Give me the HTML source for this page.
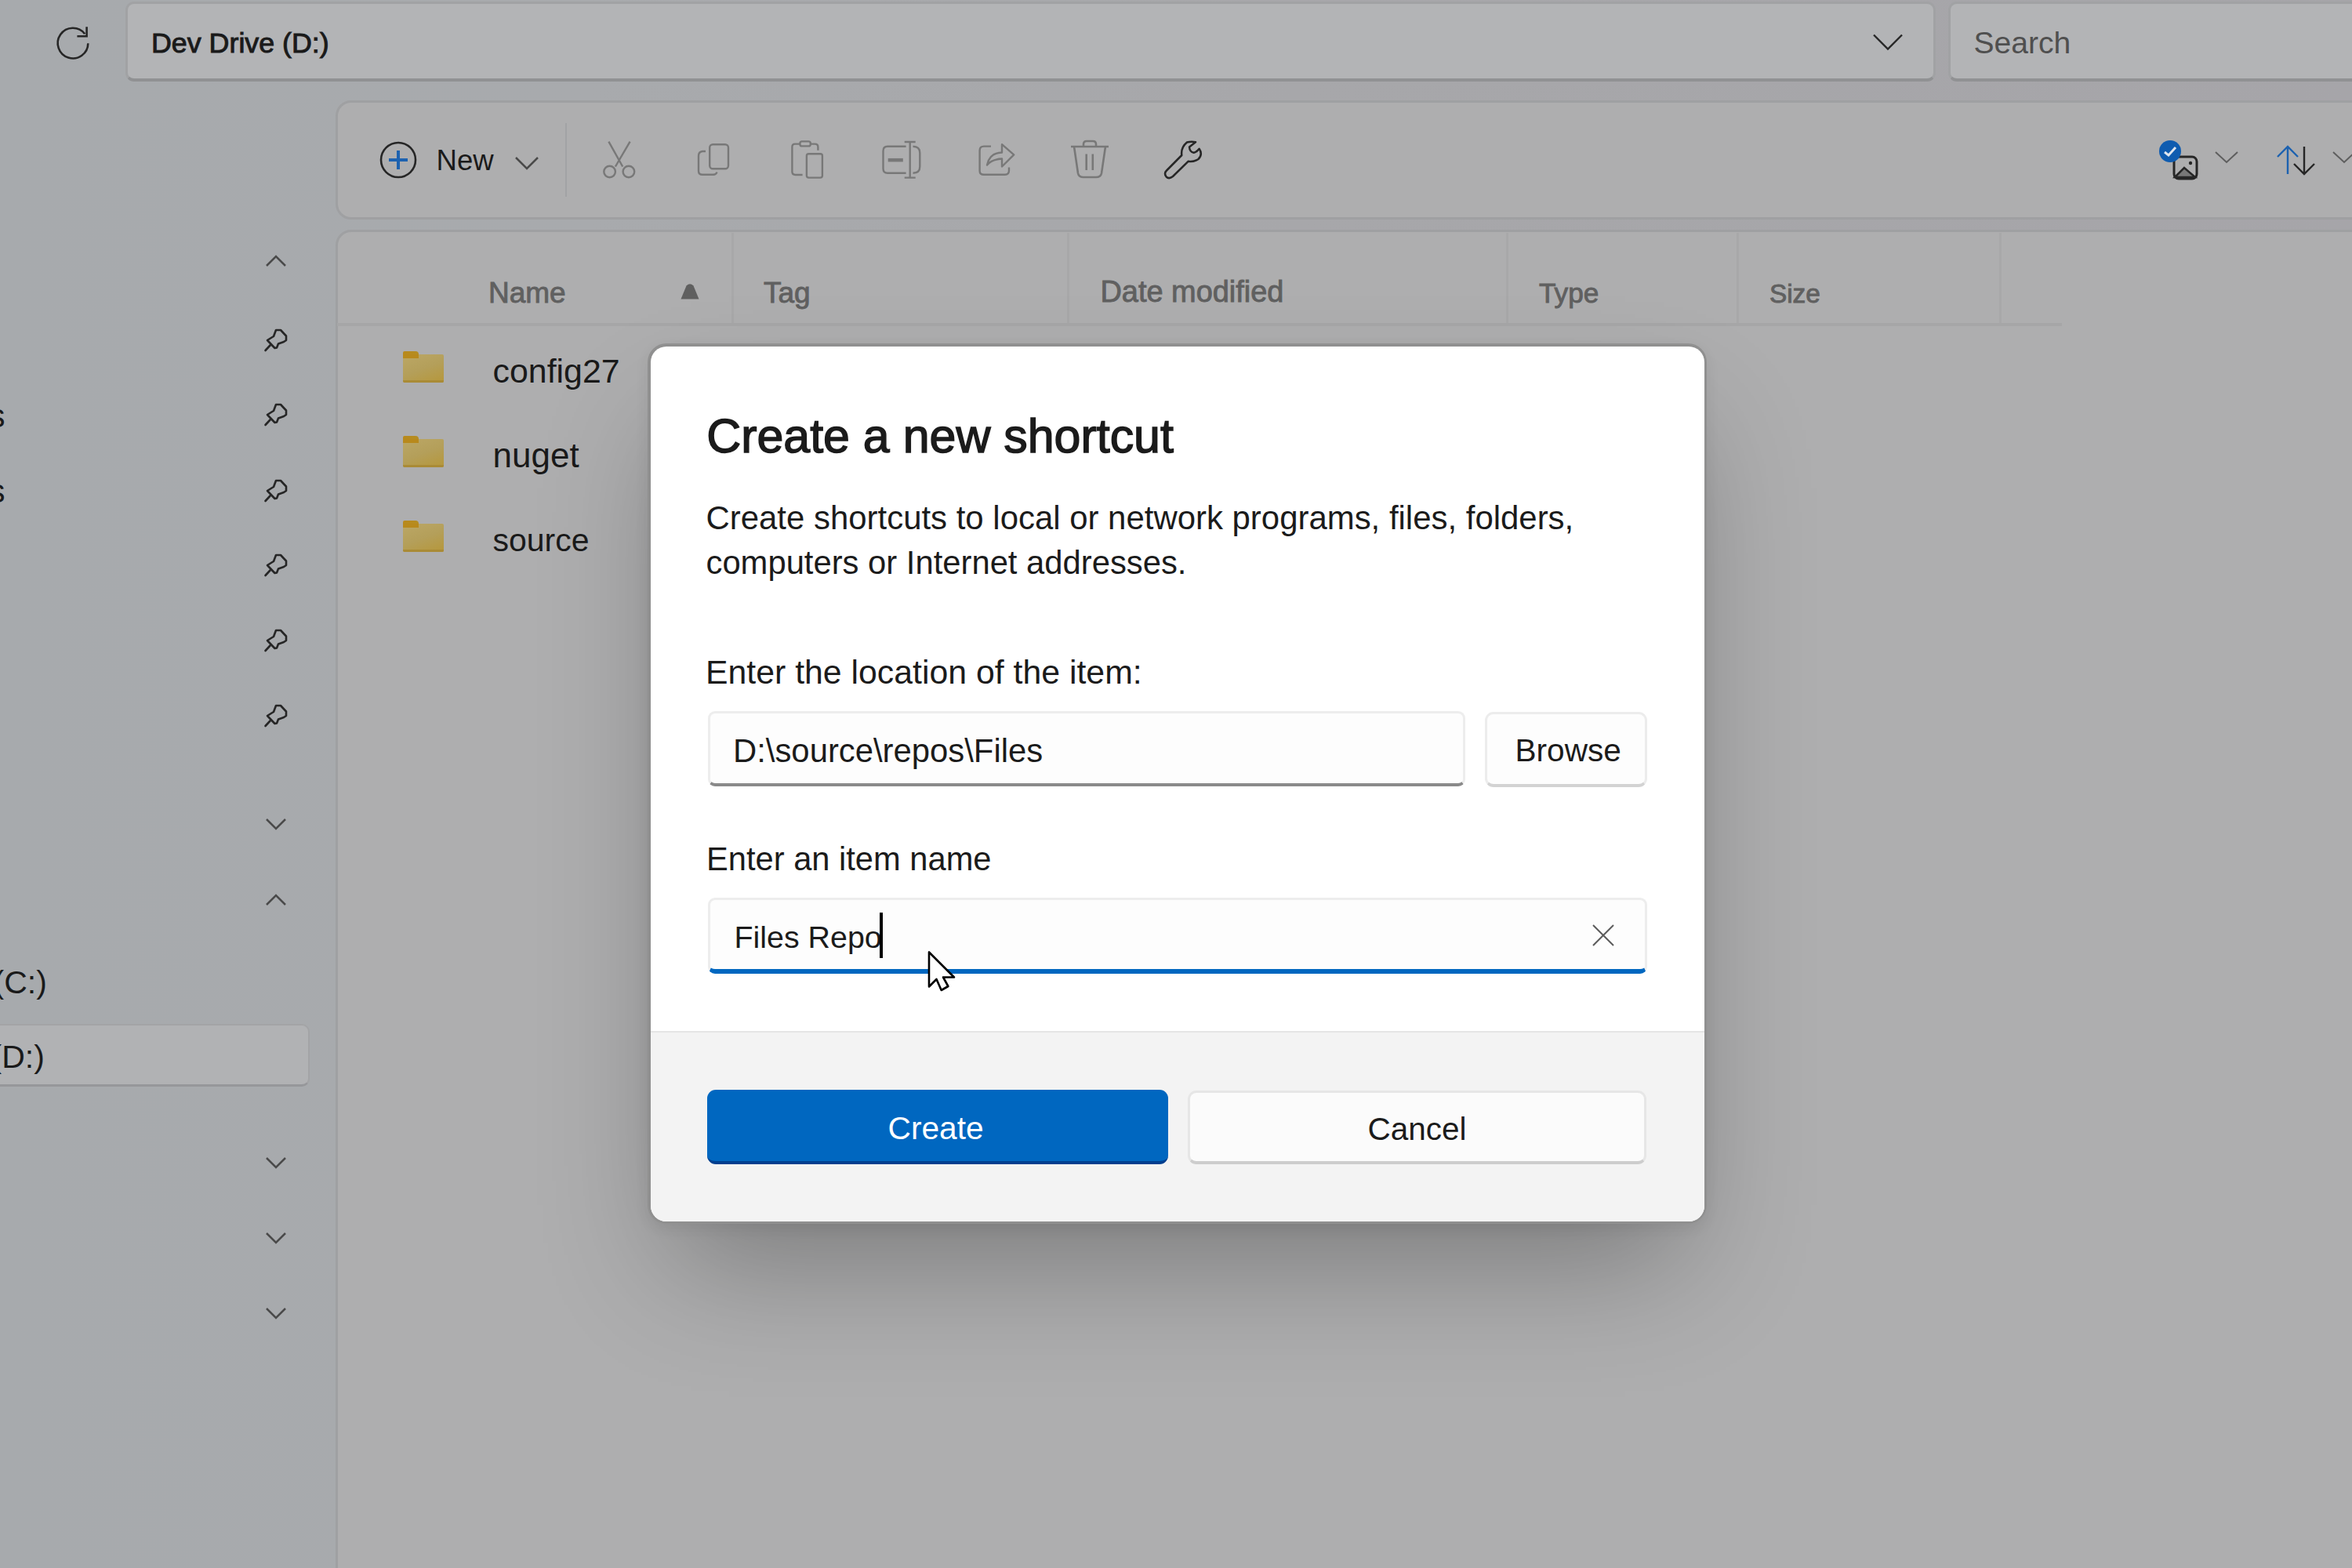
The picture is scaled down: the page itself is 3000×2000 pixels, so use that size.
<!DOCTYPE html><html><head><meta charset="utf-8"><style>
html,body{margin:0;padding:0;}
body{width:3000px;height:2000px;overflow:hidden;position:relative;background:linear-gradient(90deg,#a7aaad 0%,#a8aaad 25%,#a7a7aa 55%,#a6a5a9 100%);font-family:"Liberation Sans",sans-serif;}
.t{position:absolute;white-space:nowrap;}
svg{overflow:visible}
</style></head><body>
<svg style="position:absolute;left:0px;top:0.4px;" width="140" height="100" viewBox="0 0 140 100"><path d="M 110.6 34.3 L 110.6 46.3 L 98.4 46.3" stroke="#262626" stroke-width="2.6" fill="none" stroke-linejoin="miter"/><path d="M 108.2 43.2 A 19.3 19.3 0 1 0 112.3 55.2" stroke="#262626" stroke-width="2.6" fill="none"/></svg>
<div style="position:absolute;left:160px;top:2px;width:2309px;height:102px;box-sizing:border-box;background:#b3b4b6;border:3px solid #a1a2a4;border-bottom:4px solid #909193;border-radius:11px;"></div>
<div class="t" style="left:193.0px;top:37.7px;font-size:35.8px;line-height:35.8px;font-weight:400;color:#1a1a1a;-webkit-text-stroke:1.0px #1a1a1a;">Dev Drive (D:)</div>
<svg style="position:absolute;left:2385px;top:40px;" width="46" height="30" viewBox="0 0 46 30"><path d="M 5 4.5 L 23 22.5 L 41 4.5" stroke="#262626" stroke-width="2.4" fill="none"/></svg>
<div style="position:absolute;left:2485px;top:2px;width:600px;height:102px;box-sizing:border-box;background:#b3b4b6;border:3px solid #a1a2a4;border-bottom:4px solid #909193;border-radius:11px;"></div>
<div class="t" style="left:2517.5px;top:34.9px;font-size:39.1px;line-height:39.1px;font-weight:400;color:#4f4f4f;">Search</div>
<div style="position:absolute;left:428px;top:128px;width:2700px;height:152px;box-sizing:border-box;background:#aeaeaf;border:3px solid #9fa0a2;border-radius:20px;"></div>
<svg style="position:absolute;left:480px;top:176px;" width="60" height="60" viewBox="0 0 60 60"><circle cx="28" cy="28" r="22" stroke="#262626" stroke-width="2.6" fill="none"/><path d="M 16 28 L 40 28 M 28 16 L 28 40" stroke="#1d62b0" stroke-width="4"/></svg>
<div class="t" style="left:556.5px;top:187.0px;font-size:36.6px;line-height:36.6px;font-weight:400;color:#1a1a1a;">New</div>
<svg style="position:absolute;left:655px;top:198px;" width="36" height="24" viewBox="0 0 36 24"><path d="M 3 3 L 17 17 L 31 3" stroke="#4a4a4a" stroke-width="2.5" fill="none"/></svg>
<div style="position:absolute;left:721px;top:157px;width:2px;height:94px;background:#a2a3a5;"></div>
<svg style="position:absolute;left:766px;top:176px;" width="50" height="56" viewBox="0 0 50 56"><g stroke="#787878" stroke-width="2.4" fill="none"><circle cx="11.6" cy="43" r="7.3"/><circle cx="35.9" cy="43" r="7.3"/><path d="M 10.4 4.7 L 28.2 36.5 M 37.6 4.7 L 18.9 36.5"/></g></svg>
<svg style="position:absolute;left:884px;top:178px;" width="50" height="50" viewBox="0 0 50 50"><g stroke="#787878" stroke-width="2.4" fill="none"><rect x="21.2" y="6.2" width="23.8" height="31" rx="4"/><path d="M 16 15 L 12 15 Q 7 15.5 7 21 L 7 40 Q 7 44.8 12 44.8 L 26 44.8 Q 29.5 44.8 30.5 41.5"/></g></svg>
<svg style="position:absolute;left:1005px;top:176px;" width="56" height="56" viewBox="0 0 56 56"><g stroke="#787878" stroke-width="2.4" fill="none"><path d="M 15.4 7.6 L 9 7.6 Q 5.4 7.6 5.4 11.5 L 5.4 43 Q 5.4 47 9.5 47 L 18.6 47"/><path d="M 28.8 7.6 L 34.5 7.6 Q 38.4 7.6 38.4 11.5 L 38.4 15.7"/><rect x="15.4" y="4.4" width="13.4" height="6" rx="2.5"/><rect x="23.9" y="20.3" width="20" height="30.3" rx="2.5"/></g></svg>
<svg style="position:absolute;left:1122px;top:176px;" width="56" height="56" viewBox="0 0 56 56"><g stroke="#787878" stroke-width="2.4" fill="none"><path d="M 33.6 10.8 L 10 10.8 Q 4.5 10.8 4.5 16.5 L 4.5 39 Q 4.5 44.8 10 44.8 L 33.6 44.8"/><path d="M 42.5 10.8 Q 51.3 11 51.3 19 L 51.3 36.5 Q 51.3 44.6 42.5 44.8"/><path d="M 31.7 5 L 45.7 5 M 38.7 5 L 38.7 50.6 M 31.7 50.6 L 45.7 50.6"/></g><rect x="10.7" y="25.9" width="19.1" height="4.5" fill="#787878"/></svg>
<svg style="position:absolute;left:1245px;top:179px;" width="54" height="50" viewBox="0 0 54 50"><g stroke="#787878" stroke-width="2.4" fill="none" stroke-linejoin="round"><path d="M 19 7.6 L 10 7.6 Q 4.6 7.6 4.6 13 L 4.6 39 Q 4.6 43.8 10 43.8 L 37 43.8 Q 42 43.8 42 38.5 L 42 34.5"/><path d="M 14 31.5 Q 17 16 33 15.5 L 33 5.2 L 48.2 18.4 L 33 33.5 L 33 23.5 Q 20 24 14 31.5 Z"/></g></svg>
<svg style="position:absolute;left:1362px;top:176px;" width="56" height="56" viewBox="0 0 56 56"><g stroke="#787878" stroke-width="2.6" fill="none"><path d="M 4 11 L 52 11 M 20 11 L 20 8 Q 20 4 24 4 L 32 4 Q 36 4 36 8 L 36 11"/><path d="M 8 11 L 13 45 Q 14 50 20 50 L 36 50 Q 42 50 43 45 L 48 11"/><path d="M 23.7 20.5 L 23.7 41 M 31.8 20.5 L 31.8 41"/></g></svg>
<svg style="position:absolute;left:1482px;top:176px;" width="56" height="56" viewBox="0 0 56 56"><path d="M 25.3 22 Q 24 12 32 5.5 Q 37 4.3 43 5.2 L 35 11.5 Q 35.5 18 40.6 18.8 Q 44.5 18 47.6 13.8 Q 52.5 21 46.5 27 Q 40 31 33.8 29.7 L 14 49 Q 9 53 5.5 49.3 Q 2.3 45 6 41.5 Z" stroke="#262626" stroke-width="2.5" fill="none" stroke-linejoin="round"/></svg>
<svg style="position:absolute;left:2750px;top:176px;" width="60" height="60" viewBox="0 0 60 60"><rect x="23" y="24" width="29" height="28" rx="6" stroke="#262626" stroke-width="3" fill="none"/><path d="M 24 50 L 36 38 L 50 50 Z" fill="#787878" stroke="#262626" stroke-width="2.5"/><circle cx="44" cy="32" r="2.2" fill="#262626"/><circle cx="18" cy="17" r="14" fill="#0f5cb0" stroke="#aeaeaf" stroke-width="0"/><path d="M 11 18 L 16 22 L 25 12" stroke="#dfe6ef" stroke-width="3" fill="none"/></svg>
<svg style="position:absolute;left:2822px;top:190px;" width="36" height="24" viewBox="0 0 36 24"><path d="M 4 4 L 18 17 L 32 4" stroke="#5e5e5e" stroke-width="2" fill="none"/></svg>
<svg style="position:absolute;left:2900px;top:182px;" width="60" height="46" viewBox="0 0 60 46"><path d="M 18 40 L 18 5 M 5 18 L 18 5 L 31 18" stroke="#1d62b0" stroke-width="2.4" fill="none"/><path d="M 39 5 L 39 40 M 26 27 L 39 40 L 52 27" stroke="#262626" stroke-width="2.4" fill="none"/></svg>
<svg style="position:absolute;left:2972px;top:190px;" width="36" height="24" viewBox="0 0 36 24"><path d="M 4 4 L 18 17 L 32 4" stroke="#5e5e5e" stroke-width="2" fill="none"/></svg>
<div style="position:absolute;left:428px;top:292.5px;width:2700px;height:1800px;box-sizing:border-box;background:#aeaeaf;border:3px solid #9fa0a2;border-radius:20px;"></div>
<div class="t" style="left:623.0px;top:354.7px;font-size:37px;line-height:37px;font-weight:400;color:#606060;-webkit-text-stroke:0.9px #606060;">Name</div>
<svg style="position:absolute;left:860px;top:355px;" width="40" height="35" viewBox="0 0 40 35"><path d="M 8.5 26.5 L 15.5 9.5 Q 20 5 24.5 9.5 L 31.5 26.5 Z" fill="#5f5f5f"/></svg>
<div style="position:absolute;left:932.5px;top:297px;width:3px;height:115px;background:#a8a8a9;"></div>
<div style="position:absolute;left:1360.5px;top:297px;width:3px;height:115px;background:#a8a8a9;"></div>
<div style="position:absolute;left:1920.5px;top:297px;width:3px;height:115px;background:#a8a8a9;"></div>
<div style="position:absolute;left:2214.5px;top:297px;width:3px;height:115px;background:#a8a8a9;"></div>
<div style="position:absolute;left:2549.5px;top:297px;width:3px;height:115px;background:#a8a8a9;"></div>
<div style="position:absolute;left:430px;top:412px;width:2200px;height:3.5px;background:#a6a6a7;"></div>
<div class="t" style="left:974.0px;top:354.7px;font-size:37px;line-height:37px;font-weight:400;color:#606060;-webkit-text-stroke:0.9px #606060;">Tag</div>
<div class="t" style="left:1403.5px;top:353.9px;font-size:37.9px;line-height:37.9px;font-weight:400;color:#606060;-webkit-text-stroke:0.9px #606060;">Date modified</div>
<div class="t" style="left:1963.0px;top:356.2px;font-size:35.2px;line-height:35.2px;font-weight:400;color:#606060;-webkit-text-stroke:0.9px #606060;">Type</div>
<div class="t" style="left:2256.9px;top:357.7px;font-size:33.4px;line-height:33.4px;font-weight:400;color:#606060;-webkit-text-stroke:0.9px #606060;">Size</div>
<div style="position:absolute;left:514px;top:447.7px;width:19.5px;height:9px;border-radius:2px 4px 0 0;background:linear-gradient(90deg,#b8891c,#b58d22);"></div>
<div style="position:absolute;left:514px;top:452.0px;width:52px;height:36px;border-radius:2px;background:linear-gradient(160deg,#bba766 0%,#b49f5a 50%,#b6973a 100%);"></div>
<div style="position:absolute;left:514px;top:485.2px;width:52px;height:2.8px;border-radius:0 0 2px 2px;background:#a98b36;"></div>
<div style="position:absolute;left:514px;top:452.0px;width:19.5px;height:4.7px;background:#b8891c;"></div>
<div class="t" style="left:628.5px;top:451.7px;font-size:42.9px;line-height:42.9px;font-weight:400;color:#1a1a1a;">config27</div>
<div style="position:absolute;left:514px;top:555.7px;width:19.5px;height:9px;border-radius:2px 4px 0 0;background:linear-gradient(90deg,#b8891c,#b58d22);"></div>
<div style="position:absolute;left:514px;top:560.0px;width:52px;height:36px;border-radius:2px;background:linear-gradient(160deg,#bba766 0%,#b49f5a 50%,#b6973a 100%);"></div>
<div style="position:absolute;left:514px;top:593.2px;width:52px;height:2.8px;border-radius:0 0 2px 2px;background:#a98b36;"></div>
<div style="position:absolute;left:514px;top:560.0px;width:19.5px;height:4.7px;background:#b8891c;"></div>
<div class="t" style="left:628.5px;top:558.7px;font-size:44px;line-height:44px;font-weight:400;color:#1a1a1a;">nuget</div>
<div style="position:absolute;left:514px;top:663.7px;width:19.5px;height:9px;border-radius:2px 4px 0 0;background:linear-gradient(90deg,#b8891c,#b58d22);"></div>
<div style="position:absolute;left:514px;top:668.0px;width:52px;height:36px;border-radius:2px;background:linear-gradient(160deg,#bba766 0%,#b49f5a 50%,#b6973a 100%);"></div>
<div style="position:absolute;left:514px;top:701.2px;width:52px;height:2.8px;border-radius:0 0 2px 2px;background:#a98b36;"></div>
<div style="position:absolute;left:514px;top:668.0px;width:19.5px;height:4.7px;background:#b8891c;"></div>
<div class="t" style="left:628.5px;top:669.3px;font-size:41px;line-height:41px;font-weight:400;color:#1a1a1a;">source</div>
<svg style="position:absolute;left:338px;top:324px;" width="28" height="18" viewBox="0 0 28 18"><path d="M 2 15 L 14 3 L 26 15" stroke="#4a4a4a" stroke-width="2.5" fill="none"/></svg>
<svg style="position:absolute;left:336px;top:417px;" width="34" height="34" viewBox="0 0 34 34"><g stroke="#262626" stroke-width="2.6" fill="none" stroke-linejoin="round" stroke-linecap="round"><path d="M 16 4 L 22 4 L 29 11.5 L 29 17 L 26 19 L 19 21.5 L 17 26.5 L 14.5 27 L 5 17 L 10.5 13.5 L 13 12 Z"/><path d="M 8.5 23.5 L 2.5 30"/></g></svg>
<svg style="position:absolute;left:336px;top:512px;" width="34" height="34" viewBox="0 0 34 34"><g stroke="#262626" stroke-width="2.6" fill="none" stroke-linejoin="round" stroke-linecap="round"><path d="M 16 4 L 22 4 L 29 11.5 L 29 17 L 26 19 L 19 21.5 L 17 26.5 L 14.5 27 L 5 17 L 10.5 13.5 L 13 12 Z"/><path d="M 8.5 23.5 L 2.5 30"/></g></svg>
<svg style="position:absolute;left:336px;top:609px;" width="34" height="34" viewBox="0 0 34 34"><g stroke="#262626" stroke-width="2.6" fill="none" stroke-linejoin="round" stroke-linecap="round"><path d="M 16 4 L 22 4 L 29 11.5 L 29 17 L 26 19 L 19 21.5 L 17 26.5 L 14.5 27 L 5 17 L 10.5 13.5 L 13 12 Z"/><path d="M 8.5 23.5 L 2.5 30"/></g></svg>
<svg style="position:absolute;left:336px;top:704px;" width="34" height="34" viewBox="0 0 34 34"><g stroke="#262626" stroke-width="2.6" fill="none" stroke-linejoin="round" stroke-linecap="round"><path d="M 16 4 L 22 4 L 29 11.5 L 29 17 L 26 19 L 19 21.5 L 17 26.5 L 14.5 27 L 5 17 L 10.5 13.5 L 13 12 Z"/><path d="M 8.5 23.5 L 2.5 30"/></g></svg>
<svg style="position:absolute;left:336px;top:800px;" width="34" height="34" viewBox="0 0 34 34"><g stroke="#262626" stroke-width="2.6" fill="none" stroke-linejoin="round" stroke-linecap="round"><path d="M 16 4 L 22 4 L 29 11.5 L 29 17 L 26 19 L 19 21.5 L 17 26.5 L 14.5 27 L 5 17 L 10.5 13.5 L 13 12 Z"/><path d="M 8.5 23.5 L 2.5 30"/></g></svg>
<svg style="position:absolute;left:336px;top:896px;" width="34" height="34" viewBox="0 0 34 34"><g stroke="#262626" stroke-width="2.6" fill="none" stroke-linejoin="round" stroke-linecap="round"><path d="M 16 4 L 22 4 L 29 11.5 L 29 17 L 26 19 L 19 21.5 L 17 26.5 L 14.5 27 L 5 17 L 10.5 13.5 L 13 12 Z"/><path d="M 8.5 23.5 L 2.5 30"/></g></svg>
<div class="t" style="left:-14.5px;top:510.4px;font-size:42px;line-height:42px;font-weight:400;color:#1a1a1a;">s</div>
<div class="t" style="left:-14.5px;top:606.4px;font-size:42px;line-height:42px;font-weight:400;color:#1a1a1a;">s</div>
<svg style="position:absolute;left:338px;top:1042px;" width="28" height="18" viewBox="0 0 28 18"><path d="M 2 3 L 14 15 L 26 3" stroke="#4a4a4a" stroke-width="2.5" fill="none"/></svg>
<svg style="position:absolute;left:338px;top:1139px;" width="28" height="18" viewBox="0 0 28 18"><path d="M 2 15 L 14 3 L 26 15" stroke="#4a4a4a" stroke-width="2.5" fill="none"/></svg>
<div class="t" style="left:-8.5px;top:1233.3px;font-size:41px;line-height:41px;font-weight:400;color:#1a1a1a;">(C:)</div>
<div style="position:absolute;left:-20px;top:1306px;width:415px;height:80px;box-sizing:border-box;background:#b1b2b4;border:2px solid #a3a4a6;border-bottom:3px solid #96979a;border-radius:10px;"></div>
<div class="t" style="left:-11.5px;top:1328.3px;font-size:41px;line-height:41px;font-weight:400;color:#1a1a1a;">(D:)</div>
<svg style="position:absolute;left:338px;top:1474px;" width="28" height="18" viewBox="0 0 28 18"><path d="M 2 3 L 14 15 L 26 3" stroke="#4a4a4a" stroke-width="2.5" fill="none"/></svg>
<svg style="position:absolute;left:338px;top:1570px;" width="28" height="18" viewBox="0 0 28 18"><path d="M 2 3 L 14 15 L 26 3" stroke="#4a4a4a" stroke-width="2.5" fill="none"/></svg>
<svg style="position:absolute;left:338px;top:1666px;" width="28" height="18" viewBox="0 0 28 18"><path d="M 2 3 L 14 15 L 26 3" stroke="#4a4a4a" stroke-width="2.5" fill="none"/></svg>
<div style="position:absolute;left:826px;top:438px;width:1351px;height:1123px;border-radius:24px;box-shadow:0 80px 150px -30px rgba(0,0,0,0.29), 0 6px 18px rgba(0,0,0,0.07);background:#909090;"></div>
<div style="position:absolute;left:830px;top:442px;width:1344px;height:1116px;border-radius:20px;overflow:hidden;background:#fff;">
<div style="position:absolute;left:0;top:873px;width:1344px;height:243px;background:#f3f3f3;border-top:2px solid #e5e5e5;"></div>
</div>
<div class="t" style="left:901.2px;top:526.4px;font-size:60.9px;line-height:60.9px;font-weight:400;color:#1b1b1b;-webkit-text-stroke:1.5px #1b1b1b;">Create a new shortcut</div>
<div class="t" style="left:900.5px;top:640.0px;font-size:41.93px;line-height:41.93px;font-weight:400;color:#1b1b1b;">Create shortcuts to local or network programs, files, folders,</div>
<div class="t" style="left:900.5px;top:696.6px;font-size:41.78px;line-height:41.78px;font-weight:400;color:#1b1b1b;">computers or Internet addresses.</div>
<div class="t" style="left:900.0px;top:836.1px;font-size:42.8px;line-height:42.8px;font-weight:400;color:#1b1b1b;">Enter the location of the item:</div>
<div style="position:absolute;left:903px;top:907px;width:966px;height:96px;box-sizing:border-box;background:#fdfdfd;border:3px solid #ededed;border-bottom:4px solid #8a8a8a;border-radius:9px;"></div>
<div class="t" style="left:935.0px;top:936.9px;font-size:41.83px;line-height:41.83px;font-weight:400;color:#1b1b1b;">D:\source\repos\Files</div>
<div style="position:absolute;left:1894px;top:908px;width:207px;height:96px;box-sizing:border-box;background:#fdfdfd;border:3px solid #ececec;border-bottom:4px solid #d3d3d3;border-radius:11px;"></div>
<div class="t" style="left:1932.5px;top:937.4px;font-size:40.6px;line-height:40.6px;font-weight:400;color:#1b1b1b;">Browse</div>
<div class="t" style="left:901.0px;top:1074.7px;font-size:41.67px;line-height:41.67px;font-weight:400;color:#1b1b1b;">Enter an item name</div>
<div style="position:absolute;left:903px;top:1145px;width:1198px;height:97px;box-sizing:border-box;background:#fdfdfd;border:3px solid #ededed;border-bottom:6px solid #0067c0;border-radius:9px;"></div>
<div class="t" style="left:936.5px;top:1176.3px;font-size:39.4px;line-height:39.4px;font-weight:400;color:#1b1b1b;">Files Repo</div>
<div style="position:absolute;left:1122px;top:1164px;width:4px;height:58px;background:#000;"></div>
<svg style="position:absolute;left:2030px;top:1178px;" width="30" height="30" viewBox="0 0 30 30"><path d="M 2 2 L 28 28 M 28 2 L 2 28" stroke="#5c5c5c" stroke-width="2"/></svg>
<div style="position:absolute;left:902px;top:1390px;width:588px;height:95px;box-sizing:border-box;background:#0067c0;border-bottom:4px solid #003f8f;border-radius:11px;"></div>
<div class="t" style="left:1132.5px;top:1418.5px;font-size:40.7px;line-height:40.7px;font-weight:400;color:#ffffff;">Create</div>
<div style="position:absolute;left:1515px;top:1391px;width:585px;height:94px;box-sizing:border-box;background:#fbfbfb;border:3px solid #e6e6e6;border-bottom:4px solid #cdcdcd;border-radius:11px;"></div>
<div class="t" style="left:1744.5px;top:1419.7px;font-size:40.5px;line-height:40.5px;font-weight:400;color:#1b1b1b;">Cancel</div>
<svg style="position:absolute;left:1182px;top:1212px;" width="40" height="56" viewBox="0 0 40 56"><path d="M 3 2.5 L 3 46.5 L 12.5 37 L 18.7 51 L 27.4 46 L 21 34.5 L 35 34.5 Z" fill="#fff" stroke="#000" stroke-width="2.6" stroke-linejoin="round"/></svg>
</body></html>
